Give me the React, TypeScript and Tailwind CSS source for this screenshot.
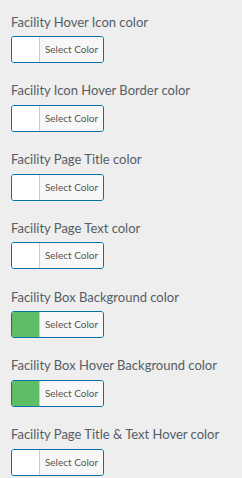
import React from "react";

const items: { label: string; color: string }[] = [
  { label: "Facility Hover Icon color", color: "#ffffff" },
  { label: "Facility Icon Hover Border color", color: "#ffffff" },
  { label: "Facility Page Title color", color: "#ffffff" },
  { label: "Facility Page Text color", color: "#ffffff" },
  { label: "Facility Box Background color", color: "#5fbe65" },
  { label: "Facility Box Hover Background color", color: "#5fbe65" },
  { label: "Facility Page Title & Text Hover color", color: "#ffffff" },
];

export default function App() {
  return (
    <div
      className="w-[242px] h-[478px] overflow-hidden bg-[#eeeeee] pt-[9.5px] pl-[11px]"
      style={{ fontFamily: 'Lato, "Open Sans", sans-serif' }}
    >
      {items.map((it) => (
        <div key={it.label} className="mb-[15.25px]">
          <div className="text-[13px] leading-[24.5px] text-[#555d66] mb-[2px] whitespace-nowrap">
            {it.label}
          </div>
          <div className="flex w-[93px] h-[27px] border border-[#0073aa] rounded-[3px] overflow-hidden">
            <div
              className="w-[28px] h-full border-r border-[#cccccc]"
              style={{ backgroundColor: it.color }}
            />
            <div className="flex-1 flex items-center justify-center bg-[#f7f7f7] text-[10px] text-[#555555]">
              Select Color
            </div>
          </div>
        </div>
      ))}
    </div>
  );
}
